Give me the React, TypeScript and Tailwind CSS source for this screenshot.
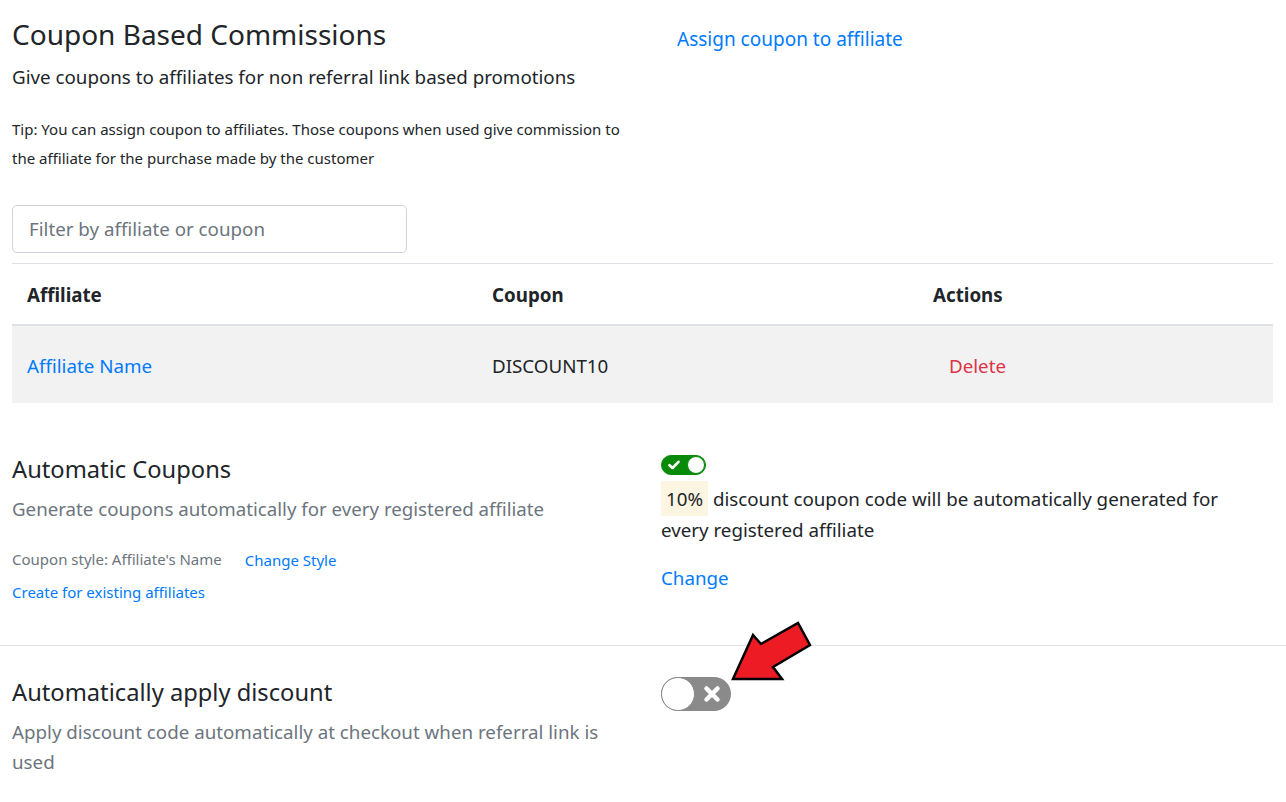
import React from "react";

const font = { fontFamily: '"Noto Sans", "Open Sans", sans-serif' };

function GreenToggle() {
  return (
    <div className="relative w-[45px] h-[20px] rounded-full bg-[#0a8a0a] border border-[#0a8a0a]">
      <svg className="absolute left-[6px] top-[4px]" width="12" height="10" viewBox="0 0 12 10">
        <path d="M1.5 5.2 L4.5 8 L10.5 1.8" fill="none" stroke="#fff" strokeWidth="2.6" strokeLinecap="round" strokeLinejoin="round" />
      </svg>
      <div className="absolute right-0 top-0 w-[18px] h-[18px] rounded-full bg-white border border-[#0a8a0a]" />
    </div>
  );
}

function GrayToggle() {
  return (
    <div className="relative w-[70px] h-[34px] rounded-full bg-[#8a8a8a]">
      <div className="absolute left-0 top-0 w-[34px] h-[34px] rounded-full bg-white border border-[#8a8a8a]" />
      <svg className="absolute left-[42px] top-[8px]" width="18" height="18" viewBox="0 0 18 18">
        <path d="M3.5 3.5 L14.5 14.5 M14.5 3.5 L3.5 14.5" stroke="#fff" strokeWidth="4.5" strokeLinecap="round" />
      </svg>
    </div>
  );
}

export default function App() {
  return (
    <div className="relative w-[1286px] h-[802px] bg-white overflow-hidden text-[#212529]" style={font}>
      {/* Top section */}
      <div className="flex pt-[17px]">
        <div className="w-[661px] pl-3 pr-[30px]">
          <h3 className="text-[28px] leading-[34px] font-normal">Coupon Based Commissions</h3>
          <p className="mt-[12px] text-[18.75px] leading-[28px]">Give coupons to affiliates for non referral link based promotions</p>
          <p className="mt-[24px] text-[15px] leading-[29px]">
            Tip: You can assign coupon to affiliates. Those coupons when used give commission to the affiliate for the purchase made by the customer
          </p>
        </div>
        <div className="pl-4 pt-[8px]">
          <a className="text-[19px] leading-[28px] text-[#007bff]">Assign coupon to affiliate</a>
        </div>
      </div>

      <div className="px-3">
        <div className="mt-[32px] w-[395px] h-[48px] border border-[#ced4da] rounded-[5px] flex items-center px-4 text-[18.75px] text-[#6c757d]">
          Filter by affiliate or coupon
        </div>

        <div className="mt-[10px] w-[1261px] border-t border-[#dee2e6]">
          <div className="grid grid-cols-[465px_441px_1fr] h-[62px] pt-[3px] items-center font-bold text-[18.75px] border-b-2 border-[#dee2e6]">
            <div className="pl-[15px]">Affiliate</div>
            <div className="pl-[15px]">Coupon</div>
            <div className="pl-[15px]">Actions</div>
          </div>
          <div className="grid grid-cols-[465px_441px_1fr] h-[77px] pt-[3px] items-center text-[18.75px] bg-[#f2f2f2]">
            <div className="pl-[15px] text-[#007bff]">Affiliate Name</div>
            <div className="pl-[15px]">DISCOUNT10</div>
            <div className="pl-[31px] text-[#dc3545]">Delete</div>
          </div>
        </div>
      </div>

      {/* Automatic Coupons */}
      <div className="flex mt-[51px]">
        <div className="w-[661px] pl-3">
          <h4 className="text-[23.7px] leading-[30px]">Automatic Coupons</h4>
          <p className="mt-[10px] text-[18.7px] leading-[30px] text-[#6c757d]">Generate coupons automatically for every registered affiliate</p>
          <div className="mt-[23px] flex items-center text-[15px] leading-[20px]">
            <span className="text-[#6c757d]">Coupon style: Affiliate's Name</span>
            <a className="ml-[23px] mt-[3px] text-[#007bff]">Change Style</a>
          </div>
          <a className="block mt-[12px] text-[15px] leading-[20px] text-[#007bff]">Create for existing affiliates</a>
        </div>
        <div className="w-[572px] pt-[1px]">
          <GreenToggle />
          <p className="mt-[8px] text-[18.75px] leading-[31px]">
            <span className="bg-[#fcf5e1] px-[5px] py-[5px]">10%</span> discount coupon code will be automatically generated for every registered affiliate
          </p>
          <a className="block mt-[19px] text-[18.75px] leading-[28px] text-[#007bff]">Change</a>
        </div>
      </div>

      <div className="mt-[43px] border-t border-[#dee2e6]" />

      {/* Automatically apply discount */}
      <div className="flex mt-[31px]">
        <div className="w-[661px] pl-3 pr-[40px]">
          <h4 className="text-[23.7px] leading-[30px]">Automatically apply discount</h4>
          <p className="mt-[10px] text-[18.75px] leading-[30px] text-[#6c757d]">Apply discount code automatically at checkout when referral link is used</p>
        </div>
        <div>
          <GrayToggle />
        </div>
      </div>

      {/* Annotation arrow */}
      <svg className="absolute left-0 top-0 pointer-events-none" width="1286" height="802" viewBox="0 0 1286 802">
        <path
          d="M733 679 L753 635 L761 644 L798 623 L810 645 L773 667 L782 679 Z"
          fill="#ed1c24"
          stroke="#000"
          strokeWidth="2.5"
          strokeLinejoin="miter"
        />
      </svg>
    </div>
  );
}
